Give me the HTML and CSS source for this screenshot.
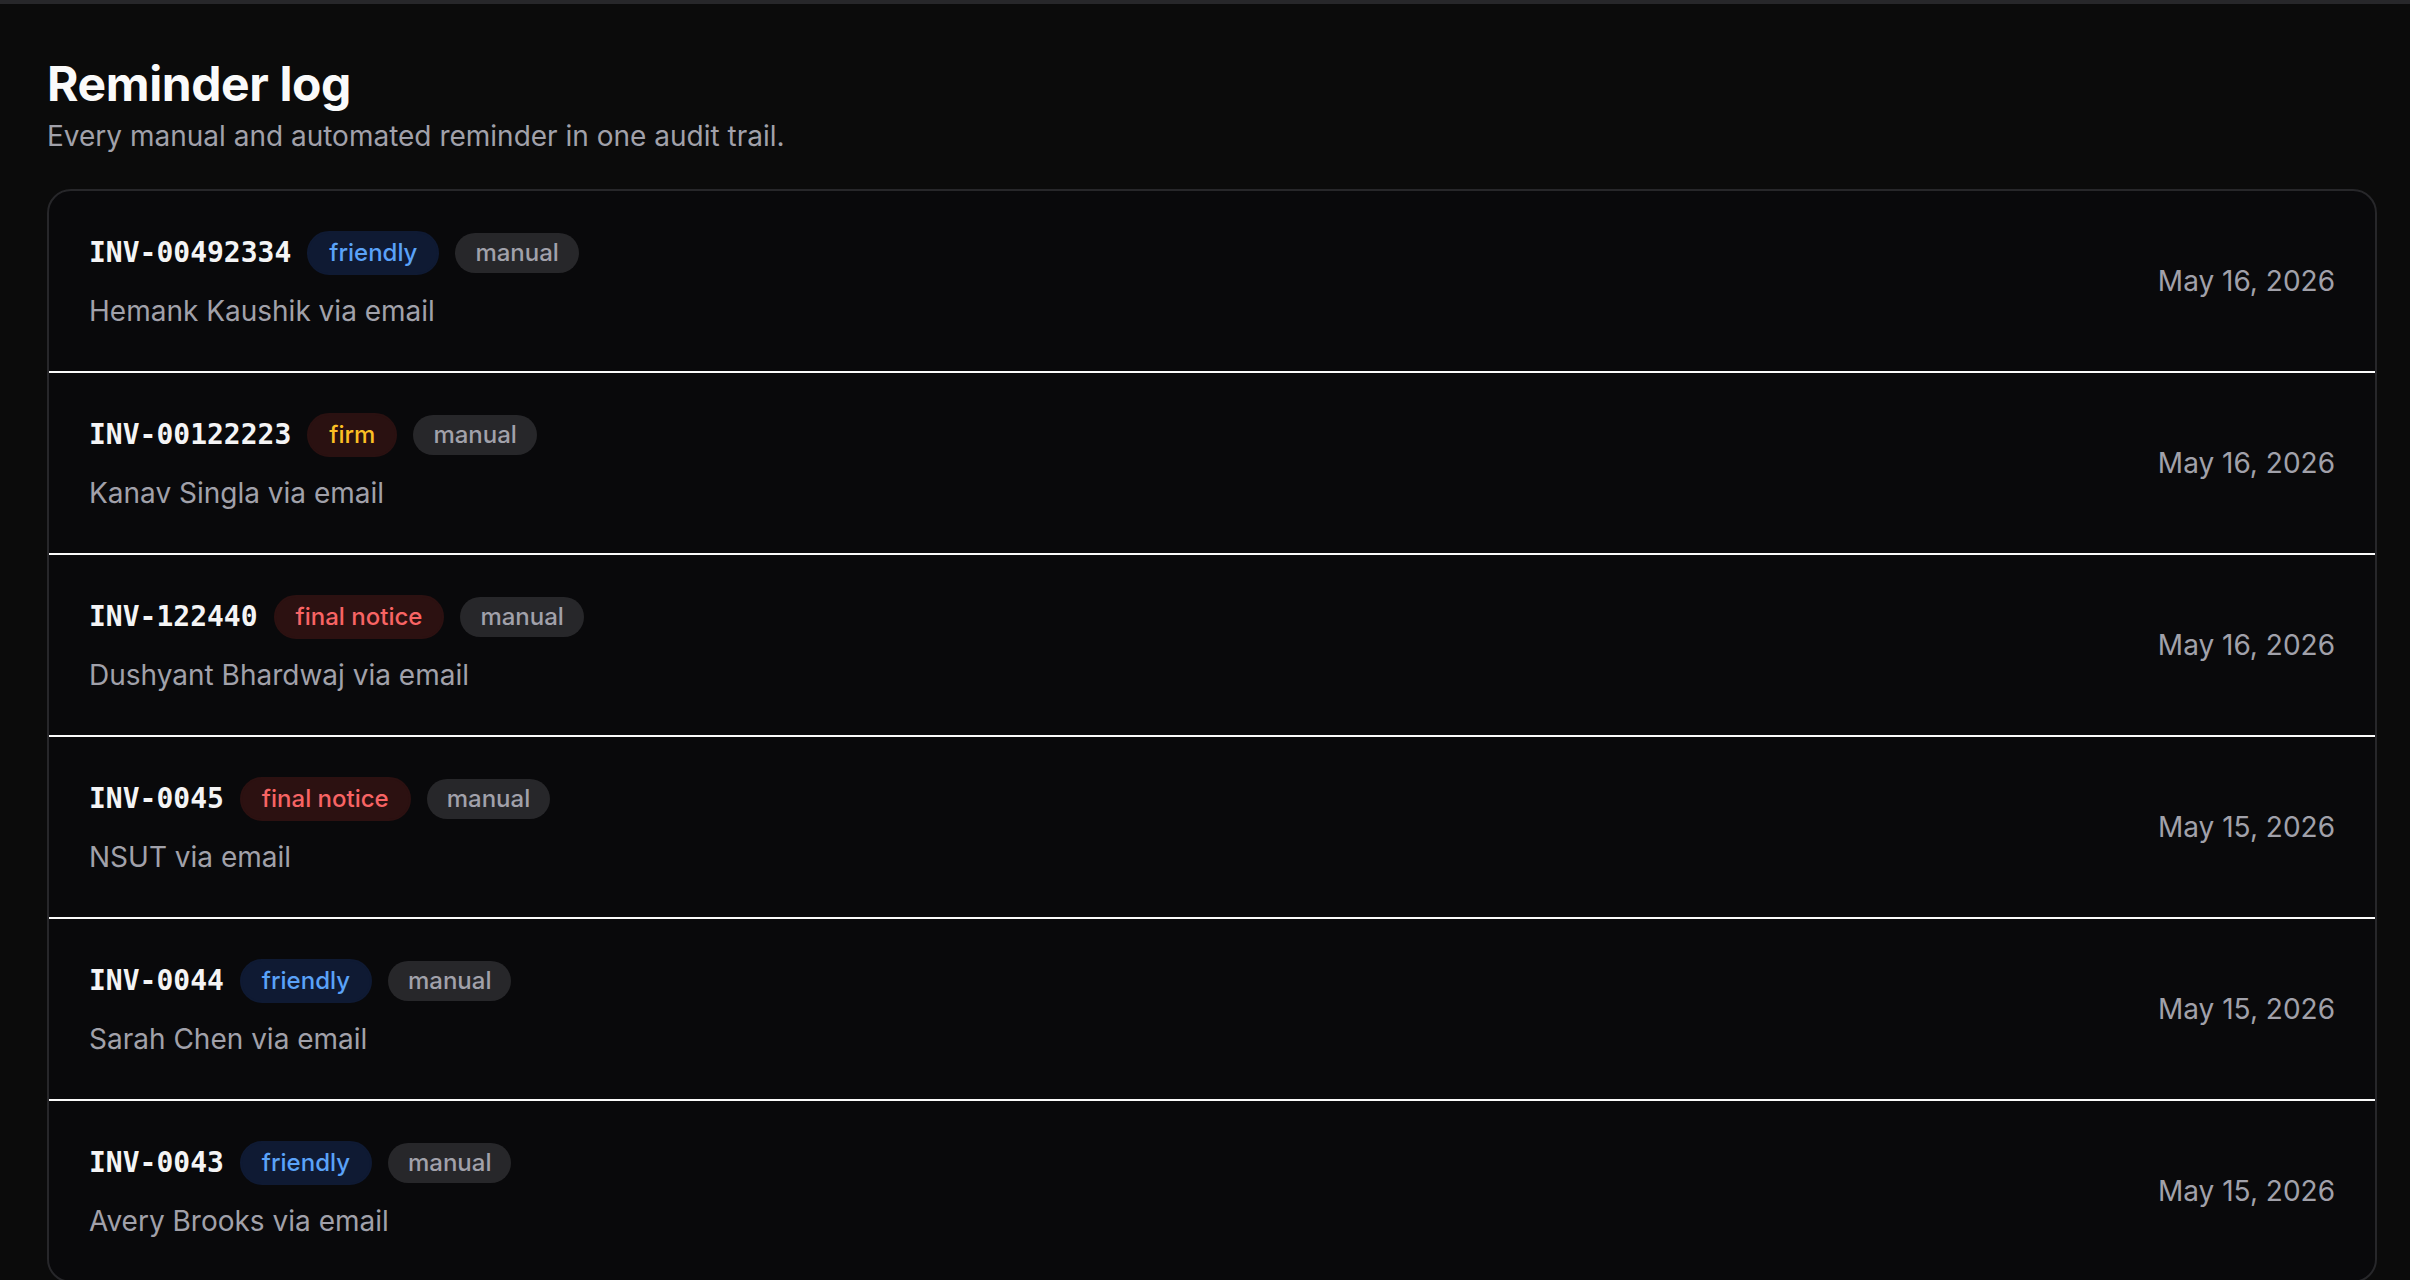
FILE: index.html
```html
<!DOCTYPE html>
<html lang="en">
<head>
    <meta charset="UTF-8">
    <meta name="viewport" content="width=device-width, initial-scale=1.0">
    <title>Reminder log</title>
    <link rel="stylesheet" href="styles.css">
</head>
<body>
    <div class="topbar"></div>

    <main class="page">
        <h1>Reminder log</h1>
        <p class="subtitle">Every manual and automated reminder in one audit trail.</p>

        <div class="log-card">
            <div class="log-row">
                <div class="log-main">
                    <div class="log-head">
                        <span class="invoice">INV-00492334</span>
                        <span class="badge badge-friendly">friendly</span>
                        <span class="badge badge-manual">manual</span>
                    </div>
                    <p class="log-meta">Hemank Kaushik via email</p>
                </div>
                <span class="log-date">May 16, 2026</span>
            </div>

            <div class="log-row">
                <div class="log-main">
                    <div class="log-head">
                        <span class="invoice">INV-00122223</span>
                        <span class="badge badge-firm">firm</span>
                        <span class="badge badge-manual">manual</span>
                    </div>
                    <p class="log-meta">Kanav Singla via email</p>
                </div>
                <span class="log-date">May 16, 2026</span>
            </div>

            <div class="log-row">
                <div class="log-main">
                    <div class="log-head">
                        <span class="invoice">INV-122440</span>
                        <span class="badge badge-final">final notice</span>
                        <span class="badge badge-manual">manual</span>
                    </div>
                    <p class="log-meta">Dushyant Bhardwaj via email</p>
                </div>
                <span class="log-date">May 16, 2026</span>
            </div>

            <div class="log-row">
                <div class="log-main">
                    <div class="log-head">
                        <span class="invoice">INV-0045</span>
                        <span class="badge badge-final">final notice</span>
                        <span class="badge badge-manual">manual</span>
                    </div>
                    <p class="log-meta">NSUT via email</p>
                </div>
                <span class="log-date">May 15, 2026</span>
            </div>

            <div class="log-row">
                <div class="log-main">
                    <div class="log-head">
                        <span class="invoice">INV-0044</span>
                        <span class="badge badge-friendly">friendly</span>
                        <span class="badge badge-manual">manual</span>
                    </div>
                    <p class="log-meta">Sarah Chen via email</p>
                </div>
                <span class="log-date">May 15, 2026</span>
            </div>

            <div class="log-row">
                <div class="log-main">
                    <div class="log-head">
                        <span class="invoice">INV-0043</span>
                        <span class="badge badge-friendly">friendly</span>
                        <span class="badge badge-manual">manual</span>
                    </div>
                    <p class="log-meta">Avery Brooks via email</p>
                </div>
                <span class="log-date">May 15, 2026</span>
            </div>
        </div>
    </main>
</body>
</html>
```

FILE: styles.css
```css
* {
    margin: 0;
    padding: 0;
    box-sizing: border-box;
}

body {
    background-color: #0b0b0b;
    color: #fafafa;
    font-family: Inter, 'Noto Sans', sans-serif;
    min-height: 100vh;
}

.topbar {
    height: 4px;
    background-color: #27272a;
}

.page {
    padding: 48px 33px 48px 47px;
}

h1 {
    font-size: 48px;
    line-height: 64px;
    font-weight: 700;
    letter-spacing: -0.4px;
    color: #fafafa;
}

.subtitle {
    font-size: 28px;
    line-height: 40px;
    color: #a1a1aa;
}

.log-card {
    margin-top: 33px;
    background-color: #09090b;
    border: 2px solid #27272a;
    border-radius: 24px;
    overflow: hidden;
}

.log-row {
    display: flex;
    align-items: center;
    justify-content: space-between;
    padding: 40px 40px;
}

.log-row + .log-row {
    border-top: 2px solid #fafafa;
}

.log-head {
    display: flex;
    align-items: center;
    gap: 16px;
    height: 44px;
}

.invoice {
    font-family: 'DejaVu Sans Mono', 'Liberation Mono', monospace;
    font-weight: 700;
    font-size: 28px;
    line-height: 40px;
    color: #f4f4f5;
}

.badge {
    display: inline-block;
    font-size: 24px;
    line-height: 32px;
    font-weight: 500;
    padding: 4px 20px;
    border-radius: 999px;
}

.badge-manual {
    background-color: #27272a;
    color: #a1a1aa;
}

.badge-friendly {
    background-color: #0f1a33;
    border: 2px solid #0f1a33;
    color: #5aa2f8;
}

.badge-firm {
    background-color: #2a1111;
    border: 2px solid #2a1111;
    color: #fbbf24;
}

.badge-final {
    background-color: #2c1111;
    border: 2px solid #2c1111;
    color: #f86464;
}

.log-meta {
    margin-top: 16px;
    font-size: 28px;
    line-height: 40px;
    color: #a1a1aa;
}

.log-date {
    font-size: 28px;
    line-height: 40px;
    color: #a1a1aa;
}
```
